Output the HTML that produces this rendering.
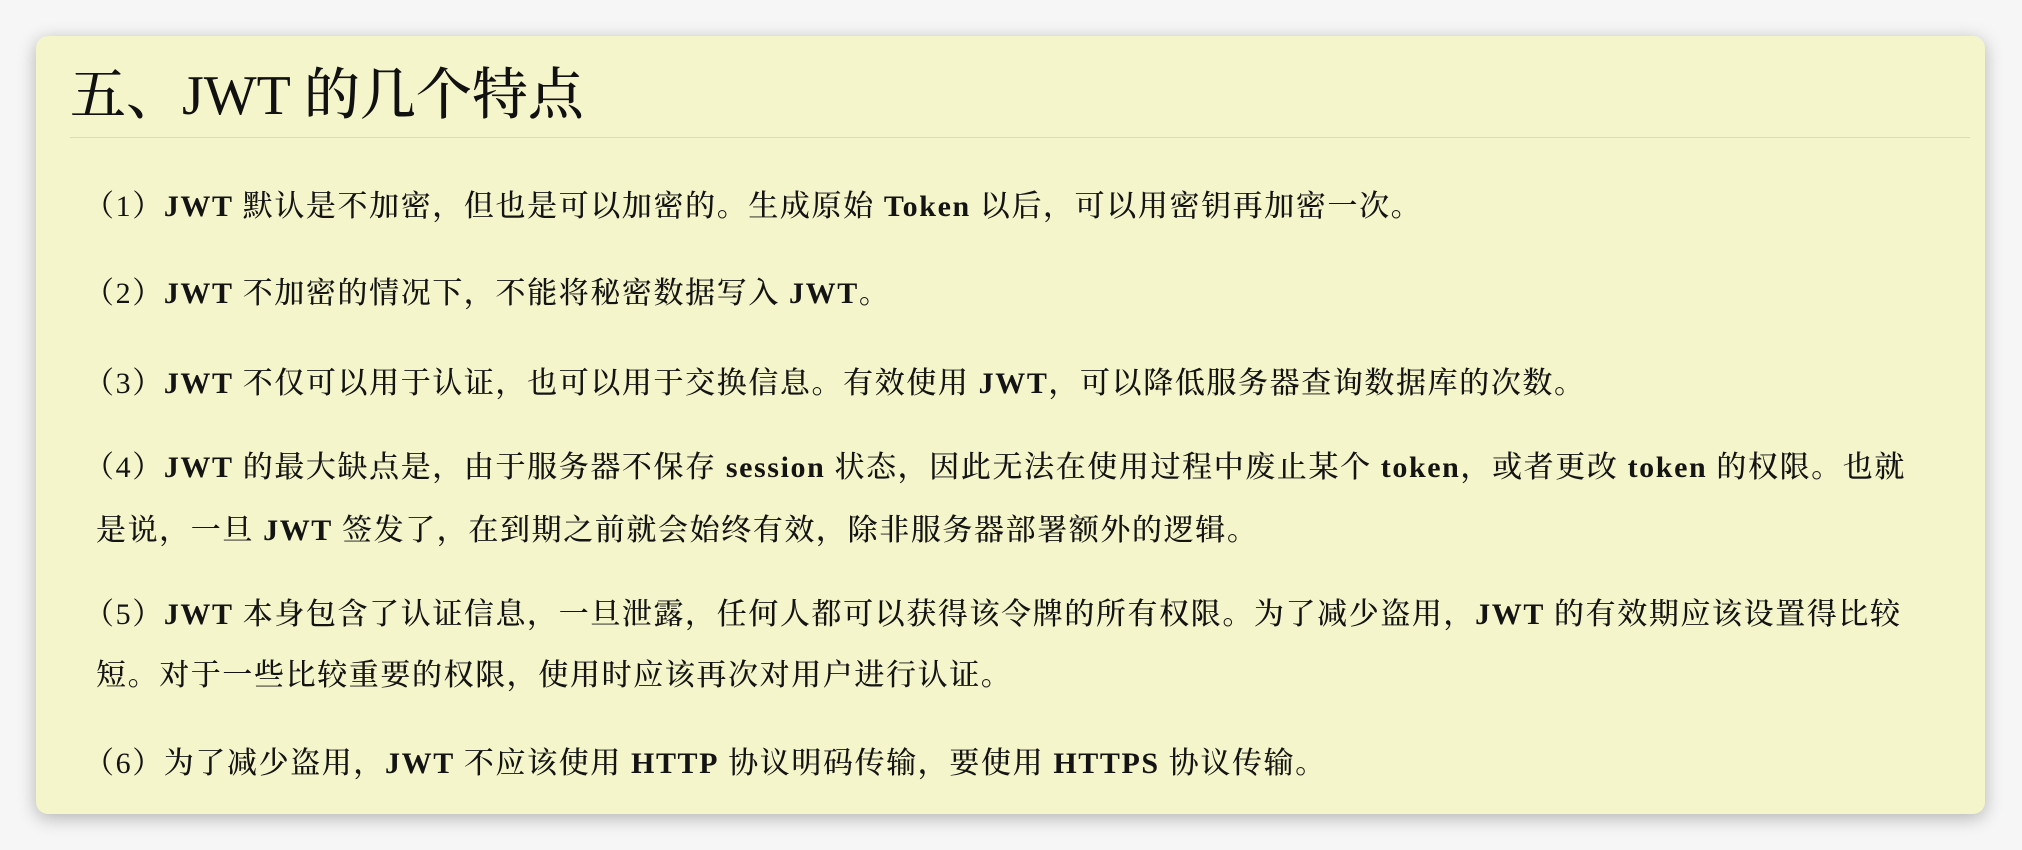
<!DOCTYPE html>
<html><head><meta charset="utf-8"><style>
html,body{margin:0;padding:0;width:2022px;height:850px;background:#f6f6f6;overflow:hidden}
.card{position:absolute;left:36px;top:36px;width:1949px;height:778px;background:#f4f5cb;border-radius:12px;box-shadow:0 4px 18px rgba(0,0,0,0.28)}
.t{position:absolute;left:70px;top:62px;font:56px/68px "Liberation Serif","Noto Serif CJK SC",serif;font-weight:500;color:#111;white-space:nowrap}
.hr{position:absolute;left:70px;top:137px;width:1900px;height:1px;background:#dcdcb6}
.l{position:absolute;font:30px/40px "Liberation Serif","Noto Serif CJK SC",serif;font-weight:500;letter-spacing:1.6px;color:#141414;white-space:nowrap}
.l b{font-weight:bold}
</style></head><body>
<div class="card"></div>
<div class="t">五、JWT 的几个特点</div>
<div class="hr"></div>
<div class="l" style="left:84px;top:187px">（1）<b>JWT</b> 默认是不加密，但也是可以加密的。生成原始 <b>Token</b> 以后，可以用密钥再加密一次。</div>
<div class="l" style="left:84px;top:274px">（2）<b>JWT</b> 不加密的情况下，不能将秘密数据写入 <b>JWT</b>。</div>
<div class="l" style="left:84px;top:364px">（3）<b>JWT</b> 不仅可以用于认证，也可以用于交换信息。有效使用 <b>JWT</b>，可以降低服务器查询数据库的次数。</div>
<div class="l" style="left:84px;top:448px">（4）<b>JWT</b> 的最大缺点是，由于服务器不保存 <b>session</b> 状态，因此无法在使用过程中废止某个 <b>token</b>，或者更改 <b>token</b> 的权限。也就</div>
<div class="l" style="left:96px;top:511px">是说，一旦 <b>JWT</b> 签发了，在到期之前就会始终有效，除非服务器部署额外的逻辑。</div>
<div class="l" style="left:84px;top:595px">（5）<b>JWT</b> 本身包含了认证信息，一旦泄露，任何人都可以获得该令牌的所有权限。为了减少盗用，<b>JWT</b> 的有效期应该设置得比较</div>
<div class="l" style="left:96px;top:656px">短。对于一些比较重要的权限，使用时应该再次对用户进行认证。</div>
<div class="l" style="left:84px;top:744px">（6）为了减少盗用，<b>JWT</b> 不应该使用 <b>HTTP</b> 协议明码传输，要使用 <b>HTTPS</b> 协议传输。</div>
</body></html>
